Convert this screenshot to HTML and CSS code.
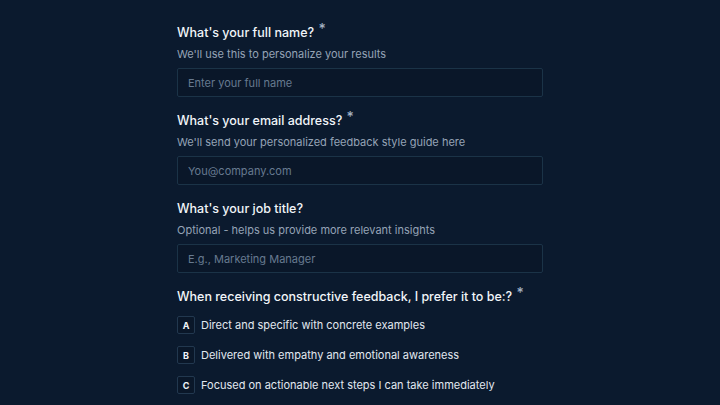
FILE: index.html
```html
<!DOCTYPE html>
<html lang="en">
<head>
<meta charset="utf-8">
<title>Feedback style quiz</title>
<link rel="stylesheet" href="styles.css">
</head>
<body>
<main class="form">
  <div class="field">
    <label class="question">What's your full name? <span class="req">*</span></label>
    <p class="hint">We'll use this to personalize your results</p>
    <input class="input" type="text" placeholder="Enter your full name">
  </div>
  <div class="field">
    <label class="question">What's your email address? <span class="req">*</span></label>
    <p class="hint">We'll send your personalized feedback style guide here</p>
    <input class="input" type="text" placeholder="You@company.com">
  </div>
  <div class="field">
    <label class="question">What's your job title?</label>
    <p class="hint">Optional - helps us provide more relevant insights</p>
    <input class="input" type="text" placeholder="E.g., Marketing Manager">
  </div>
  <div class="field">
    <label class="question">When receiving constructive feedback, I prefer it to be:? <span class="req">*</span></label>
    <ul class="options">
      <li class="option"><span class="key">A</span><span class="opt-text">Direct and specific with concrete examples</span></li>
      <li class="option"><span class="key">B</span><span class="opt-text">Delivered with empathy and emotional awareness</span></li>
      <li class="option"><span class="key">C</span><span class="opt-text">Focused on actionable next steps I can take immediately</span></li>
    </ul>
  </div>
</main>
</body>
</html>
```

FILE: styles.css
```css
html, body {
  margin: 0;
  padding: 0;
  background: #0b1a2e;
  height: 100%;
  overflow: hidden;
}
body {
  font-family: Inter, "Noto Sans", sans-serif;
  color: #f1f5f9;
}
.form {
  width: 366px;
  margin: 0 auto;
  padding-top: 23px;
  display: flex;
  flex-direction: column;
}
.field {
  display: flex;
  flex-direction: column;
  margin-bottom: 14px;
}
.question {
  display: block;
  font-size: 12.5px;
  font-weight: 500;
  line-height: 20px;
  color: #f1f5f9;
}
.req {
  color: #a3b0c2;
  font-size: 14px;
  line-height: 0;
  vertical-align: 3px;
  margin-left: 1px;
}
.hint {
  margin: 2px 0 5px;
  font-size: 11px;
  line-height: 18px;
  color: #95a3b6;
}
.input {
  box-sizing: border-box;
  height: 29px;
  width: 100%;
  background: #0a1729;
  border: 1px solid #1b3347;
  border-radius: 2px;
  padding: 0 10px;
  font-family: inherit;
  font-size: 11px;
  color: #e2e8f0;
  outline: none;
}
.input::placeholder {
  color: #677a90;
}
.options {
  list-style: none;
  margin: 9px 0 0;
  padding: 0;
  display: flex;
  flex-direction: column;
  gap: 12px;
}
.option {
  display: flex;
  align-items: center;
  gap: 6px;
  height: 18px;
}
.key {
  box-sizing: border-box;
  width: 18px;
  height: 18px;
  display: flex;
  align-items: center;
  justify-content: center;
  border: 1px solid #22384f;
  border-radius: 2px;
  background: #0a1729;
  font-size: 9px;
  font-weight: 700;
  color: #f1f5f9;
}
.opt-text {
  font-size: 11px;
  color: #e2e8f0;
}
```
